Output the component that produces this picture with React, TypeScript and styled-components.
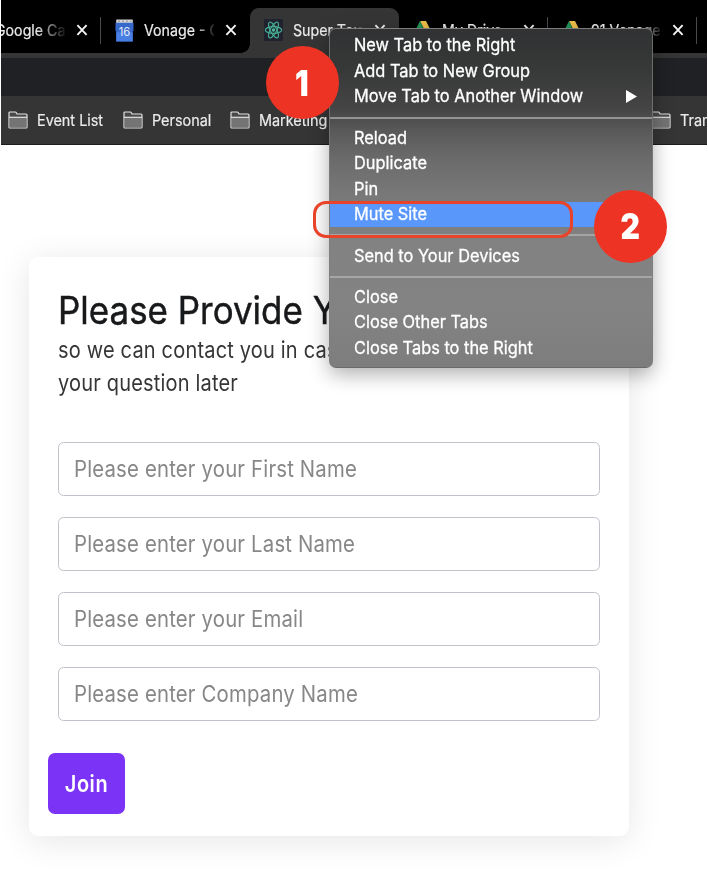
import React from 'react';
import styled, { createGlobalStyle } from 'styled-components';

const GlobalStyle = createGlobalStyle`
  * { box-sizing: border-box; }
  html, body { margin: 0; background: #fff; overflow: hidden; }
  body { font-family: Inter, sans-serif; }
`;

const Page = styled.div`
  position: relative;
  width: 708px;
  height: 872px;
  overflow: hidden;
  display: flex;
  flex-direction: column;
`;

const Browser = styled.header`
  width: 706px;
  height: 145.4px;
  margin-left: 1px;
  overflow: hidden;
  background: #353535;
  border-bottom: 1.3px solid #1c1c1c;
  flex: none;
`;

const TabStrip = styled.div`
  display: flex;
  height: 53px;
  padding-top: 8px;
  background: #000;
`;

const TabRow = styled.div`
  display: flex;
  flex: none;
  margin-left: -48.6px;
`;

const Tab = styled.div<{ $active?: boolean; $divider?: boolean }>`
  position: relative;
  flex: none;
  display: flex;
  align-items: center;
  width: 149px;
  height: 45px;
  padding: 0 0 1px 14px;
  background: ${p => (p.$active ? '#353535' : 'transparent')};
  border-radius: 9px 9px 0 0;
  &::after {
    content: '';
    display: ${p => (p.$divider ? 'block' : 'none')};
    position: absolute;
    right: 0;
    top: 9px;
    width: 1px;
    height: 27px;
    background: #4a4a4c;
  }
`;

const TabFoot = styled.i<{ $side: 'left' | 'right' }>`
  position: absolute;
  bottom: 0;
  ${p => p.$side}: -9px;
  width: 9px;
  height: 9px;
  background: radial-gradient(circle at ${p => (p.$side === 'left' ? '0' : '100%')} 0, #000 8.5px, #353535 9px);
`;

const Favicon = styled.span`
  display: flex;
  justify-content: center;
  width: 19px;
  margin-right: 10px;
`;

const TabTitle = styled.span<{ $fade: number }>`
  width: 79px;
  margin-right: -8px;
  flex: none;
  overflow: hidden;
  white-space: nowrap;
  font-size: 16px;
  line-height: 22px;
  color: #ececec;
  -webkit-text-stroke: 0.2px #ececec;
  transform: scaleX(0.888);
  transform-origin: 0 50%;
  mask-image: linear-gradient(90deg, #000 ${p => p.$fade}px, transparent 82px);
`;

const CloseIcon = styled.svg`
  width: 12px;
  height: 12px;
  margin-left: 10px;
`;

const AddressBar = styled.div`
  height: 38px;
  margin-top: 5px;
  background: #202124;
`;

const Bookmarks = styled.nav`
  display: flex;
  height: 48px;
  align-items: center;
  padding: 0 0 1px 7px;
`;

const Bookmark = styled.div<{ $width: number }>`
  display: flex;
  flex: none;
  align-items: center;
  gap: 9px;
  width: ${p => p.$width}px;
  font-size: 16px;
  white-space: nowrap;
  color: #ececec;
  -webkit-text-stroke: 0.2px #ececec;
  span { transform: scaleX(0.9); transform-origin: 0 50%; }
`;

const Content = styled.main`
  flex: 1;
  padding: 111.5px 0 0 29px;
`;

const Card = styled.form`
  display: flex;
  flex-direction: column;
  width: 600px;
  height: 579px;
  padding: 33px 29px 0;
  border-radius: 9px;
  background: #fff;
  box-shadow: 0 5px 34px rgba(0, 0, 0, 0.1);
`;

const Title = styled.h1`
  margin: 0;
  font-size: 37.5px;
  line-height: 42px;
  font-weight: 400;
  color: #18191b;
  -webkit-text-stroke: 0.45px #18191b;
  white-space: nowrap;
  transform: scaleX(0.932);
  transform-origin: 0 50%;
`;

const Lead = styled.p`
  margin: 1px 0 0;
  font-size: 22.6px;
  line-height: 33.5px;
  font-weight: 400;
  letter-spacing: 0.2px;
  color: #363636;
  white-space: nowrap;
  transform: scaleX(0.886);
  transform-origin: 0 50%;
`;

const Fields = styled.div`
  display: flex;
  flex-direction: column;
  gap: 21.5px;
  margin-top: 42.4px;
`;

const Field = styled.div`
  height: 53.5px;
  border: 1.3px solid #c3c2cb;
  border-radius: 5.5px;
  padding: 0 14px 1px 14.5px;
`;

const Input = styled.input`
  width: 100%;
  height: 100%;
  padding: 0;
  border: 0;
  outline: 0;
  background: transparent;
  font: 400 22.6px Inter, sans-serif;
  letter-spacing: 0.2px;
  transform: scaleX(0.9);
  transform-origin: 0 50%;
  &::placeholder { color: #878787; opacity: 1; }
`;

const JoinButton = styled.button`
  align-self: flex-start;
  width: 77px;
  height: 61.5px;
  margin: 32.2px 0 0 -10px;
  padding: 0;
  border: 0;
  border-radius: 7px;
  background: #7b34f5;
  color: #fff;
  font: 600 23px Inter, sans-serif;
  letter-spacing: 0.7px;
  span { display: block; transform: scaleX(0.865); }
`;

const Menu = styled.div`
  position: absolute;
  left: 329px;
  top: 27.5px;
  width: 324px;
  height: 340px;
  padding-top: 5px;
  border: 1px solid rgba(125, 125, 125, 0.75);
  border-radius: 7px;
  background: linear-gradient(#303233 0, #373838 40px, #454545 80px, #595959 102px, #6b6b6b 130px, #787878 165px, #828282 215px, #838383 280px, #7d7d7d 340px);
  box-shadow: 0 6px 20px rgba(0, 0, 0, 0.32);
`;

const MenuItem = styled.div<{ $selected?: boolean }>`
  display: flex;
  align-items: center;
  height: 25.4px;
  padding: 0 15px 1.6px 24px;
  background: ${p => (p.$selected ? '#5997fb' : 'transparent')};
  color: #fff;
  font-size: 17.5px;
  line-height: 22px;
  white-space: nowrap;
  -webkit-text-stroke: 0.3px #fff;
  span { flex: 1; transform: scaleX(0.936); transform-origin: 0 50%; }
`;

const Divider = styled.div`
  height: 16.2px;
  padding-top: 7px;
  &::after {
    content: '';
    display: block;
    height: 2px;
    background: rgba(185, 185, 185, 0.65);
  }
`;

const Highlight = styled.div`
  position: absolute;
  left: 313px;
  top: 201px;
  width: 260px;
  height: 37px;
  border: 3px solid #e9432a;
  border-radius: 13px;
`;

const Badge = styled.div<{ $x: number; $y: number }>`
  position: absolute;
  left: ${p => p.$x}px;
  top: ${p => p.$y}px;
  display: flex;
  align-items: center;
  justify-content: center;
  width: 73px;
  height: 73px;
  border-radius: 50%;
  background: #ed3324;
  color: #fff;
  font: 900 35px Inter, sans-serif;
  span { transform: scaleX(0.86); }
`;

const Close = () => (
  <CloseIcon viewBox="0 0 12 12" stroke="#f4f4f4" strokeWidth="1.9">
    <path d="M1.4 1.2 10.6 10.8M10.6 1.2 1.4 10.8" />
  </CloseIcon>
);

const Calendar = () => (
  <svg width="19" height="23" viewBox="0 0 19 23">
    <rect x="1.2" y="0.5" width="16.6" height="4" rx="0.8" fill="#d5d6d8" />
    <path d="M3 2.2h2M7 2.2h2M11 2.2h2M15 2.2h1.5" stroke="#8e8e91" strokeWidth="1" />
    <path d="M0.5 3.8h18v8l-.8 1v9.6H1.3v-9.6l-.8-1z" fill="#3668c9" />
    <path d="M1.3 13.2h16.4v9.2H1.3z" fill="#487fe5" />
    <text x="9.5" y="17.4" textAnchor="middle" fontFamily="Inter, sans-serif" fontSize="12" textLength="11.5" lengthAdjust="spacingAndGlyphs" fill="#e3ebfb">16</text>
  </svg>
);

const Atom = () => (
  <svg width="19" height="22" viewBox="0 0 19 22">
    <rect width="19" height="22" fill="#20232f" />
    <g fill="none" stroke="#46aa91" strokeWidth="1.2">
      <ellipse cx="9.5" cy="11" rx="8.2" ry="3.4" />
      <ellipse cx="9.5" cy="11" rx="8.8" ry="3.2" transform="rotate(62 9.5 11)" />
      <ellipse cx="9.5" cy="11" rx="8.8" ry="3.2" transform="rotate(118 9.5 11)" />
    </g>
    <circle cx="9.5" cy="11" r="1.7" fill="#4cb99d" />
  </svg>
);

const Drive = () => (
  <svg width="18" height="18" viewBox="0 0 18 18">
    <path d="M6 0h6l6 12h-6z" fill="#efc04a" />
    <path d="M6 0 0 12l3 6 6-12z" fill="#23955b" />
    <path d="M3 18h12l3-6H6z" fill="#4374df" />
  </svg>
);

const Folder = () => (
  <svg width="20" height="18" viewBox="0 0 20 18">
    <path d="M1 16V2q0-1 1-1h5.2q.8 0 1.3 1l.5 1h9q1 0 1 1v12q0 1-1 1H2q-1 0-1-1z" fill="#4a4a4a" stroke="#e3e3e3" strokeWidth="1.2" />
    <path d="M1.5 6.6h17v9.9h-17z" fill="#747474" />
    <path d="M1 6.3h18" stroke="#e3e3e3" strokeWidth="1.2" />
  </svg>
);

const tabs = [
  { title: 'Google Cal', fade: 46, divider: true },
  { title: 'Vonage - C', fade: 58, icon: <Calendar /> },
  { title: 'Super Tours', fade: 66, icon: <Atom />, active: true },
  { title: 'My Drive', fade: 60, icon: <Drive />, divider: true },
  { title: '91 Vonage', fade: 54, icon: <Drive />, divider: true },
];

const bookmarks: [string, number][] = [
  ['Event List', 115.2],
  ['Personal', 107],
  ['Marketing', 420.8],
  ['Translate', 100],
];

const menuGroups = [
  ['New Tab to the Right', 'Add Tab to New Group', 'Move Tab to Another Window'],
  ['Reload', 'Duplicate', 'Pin', 'Mute Site'],
  ['Send to Your Devices'],
  ['Close', 'Close Other Tabs', 'Close Tabs to the Right'],
];

const placeholders = [
  'Please enter your First Name',
  'Please enter your Last Name',
  'Please enter your Email',
  'Please enter Company Name',
];

export default function App() {
  return (
    <Page>
      <GlobalStyle />
      <Browser>
        <TabStrip>
          <TabRow>
            {tabs.map(t => (
              <Tab key={t.title} $active={t.active} $divider={t.divider}>
                {t.active && <TabFoot $side="left" />}
                {t.active && <TabFoot $side="right" />}
                <Favicon>{t.icon}</Favicon>
                <TabTitle $fade={t.fade}>{t.title}</TabTitle>
                <Close />
              </Tab>
            ))}
          </TabRow>
        </TabStrip>
        <AddressBar />
        <Bookmarks>
          {bookmarks.map(([name, width]) => (
            <Bookmark key={name} $width={width}>
              <Folder />
              <span>{name}</span>
            </Bookmark>
          ))}
        </Bookmarks>
      </Browser>

      <Content>
        <Card>
          <Title>Please Provide Y</Title>
          <Lead>
            so we can contact you in cas
            <br />
            your question later
          </Lead>
          <Fields>
            {placeholders.map(p => (
              <Field key={p}>
                <Input placeholder={p} />
              </Field>
            ))}
          </Fields>
          <JoinButton type="button">
            <span>Join</span>
          </JoinButton>
        </Card>
      </Content>

      <Menu>
        {menuGroups.map((group, i) => (
          <React.Fragment key={group[0]}>
            {i > 0 && <Divider />}
            {group.map(label => (
              <MenuItem key={label} $selected={label === 'Mute Site'}>
                <span>{label}</span>
                {label.startsWith('Move') && (
                  <svg width="11" height="13" viewBox="0 0 11 13">
                    <path d="M0 0 11 6.5 0 13z" fill="#fff" />
                  </svg>
                )}
              </MenuItem>
            ))}
          </React.Fragment>
        ))}
      </Menu>
      <Highlight />
      <Badge $x={265.5} $y={46}><span>1</span></Badge>
      <Badge $x={594} $y={189.5}><span>2</span></Badge>
    </Page>
  );
}
